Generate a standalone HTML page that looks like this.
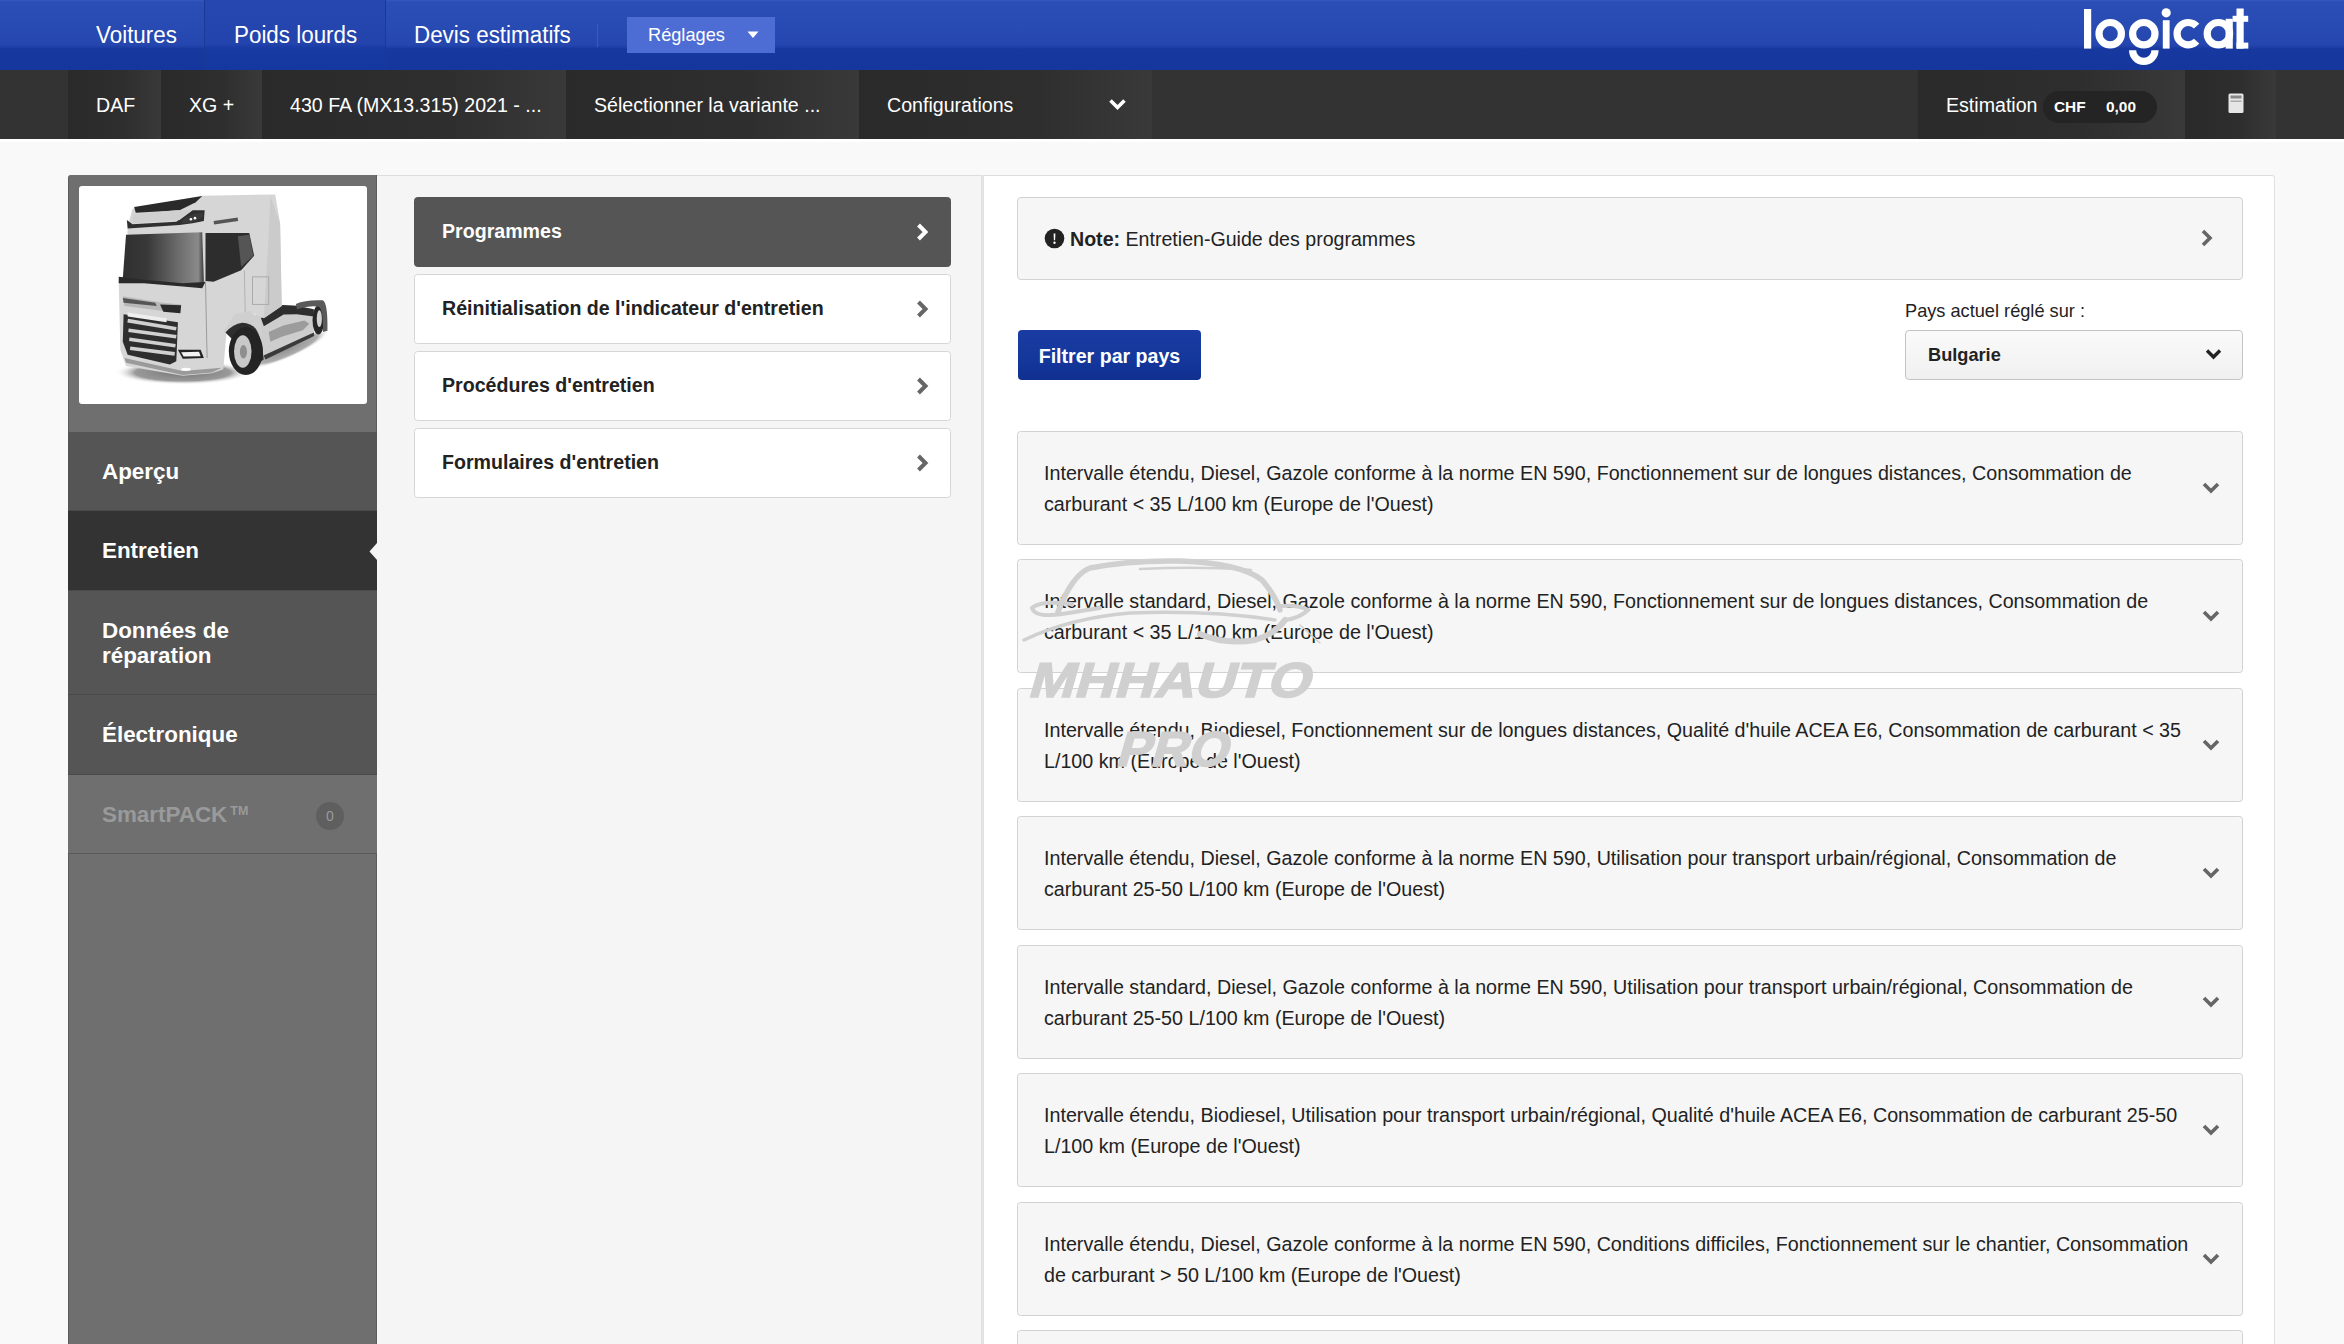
<!DOCTYPE html>
<html><head><meta charset="utf-8">
<style>
*{box-sizing:border-box;margin:0;padding:0}
html,body{width:2344px;height:1344px;overflow:hidden}
body{position:relative;background:#f9f9f9;font-family:"Liberation Sans",sans-serif;color:#222}
.abs{position:absolute}
#top{left:0;top:0;width:2344px;height:70px;background:linear-gradient(#3458c0 0,#2a4db6 3%,#284ab3 40%,#2446ae 64%,#17399f 70%,#15379d 100%)}
.nav{position:absolute;top:0;height:70px;line-height:70px;color:#fff;font-size:22.4px;white-space:nowrap;transform:scaleY(1.1);transform-origin:50% 35px}
#tabact{left:204px;top:0;width:182px;height:70px;border-left:1px solid #1a3896;border-right:1px solid #1a3896;background:linear-gradient(#2647b0 0,#2444ad 62%,#1739a2 70%,#1538a0 100%)}
#sep{left:597px;top:24px;width:1px;height:23px;background:#3a5cc0}
#regl{left:627px;top:17px;width:148px;height:36px;background:#4d6dd5}
#bar{left:0;top:70px;width:2344px;height:69px;background:#333}
.seg{position:absolute;top:70px;height:69px;line-height:71px;color:#fff;font-size:19.6px;white-space:nowrap;padding-left:28px;background:linear-gradient(90deg,#2a2a2a,#2e2e2e 60%,#393939)}
#side{left:68px;top:175px;width:309px;height:1169px;background:#6f6f6f;border-top-left-radius:3px;border-left:1px solid #5d5d5d;border-right:1px solid #5d5d5d}
#imgbox{left:79px;top:186px;width:288px;height:218px;background:#fff;border-radius:3px}
.mi{position:absolute;left:68px;width:309px;color:#fff;font-weight:bold;font-size:22.4px;padding-left:34px;background:#555;border-bottom:1px solid #4a4a4a}
#mid{left:377px;top:175px;width:606px;height:1169px;background:#f5f5f5;border-top:1px solid #ddd}
#div{left:981px;top:175px;width:3px;height:1169px;background:#e2e2e2}
#right{left:984px;top:175px;width:1291px;height:1169px;background:#fff;border-top:1px solid #ddd;border-right:1px solid #e0e0e0;border-top-right-radius:3px}
.btn{position:absolute;left:414px;width:537px;height:70px;background:#fff;border:1.4px solid #d6d6d6;border-radius:3.5px;font-weight:bold;font-size:19.6px;line-height:67px;padding-left:27px;color:#222}
.btn.act{background:#555;border-color:#555;color:#fff}
.chev{position:absolute}
.acc{position:absolute;left:1017px;width:1226px;height:114px;background:#f6f6f6;border:1.4px solid #d2d2d2;border-radius:3.5px;font-size:19.7px;line-height:31px;padding:26px 0 0 26px;color:#222}
</style></head><body>
<div id="top" class="abs"></div>
<div id="tabact" class="abs"></div>
<div class="nav" style="left:96px">Voitures</div>
<div class="nav" style="left:234px">Poids lourds</div>
<div class="nav" style="left:414px">Devis estimatifs</div>
<div id="sep" class="abs"></div>
<div id="regl" class="abs"></div>
<div class="nav" style="left:648px;top:17px;height:36px;line-height:37px;font-size:18.2px;transform:none">Réglages</div>

<div id="bar" class="abs"></div>
<div class="abs" style="left:0;top:139px;width:2344px;height:3px;background:#fff"></div>
<div class="seg" style="left:68px;width:93px">DAF</div>
<div class="seg" style="left:161px;width:101px">XG +</div>
<div class="seg" style="left:262px;width:304px">430 FA (MX13.315) 2021 - ...</div>
<div class="seg" style="left:566px;width:293px">Sélectionner la variante ...</div>
<div class="seg" style="left:859px;width:293px">Configurations</div>
<div class="seg" style="left:1918px;width:267px">Estimation</div>
<div class="seg" style="left:2185px;width:91px"></div>

<div id="side" class="abs"></div>
<div id="imgbox" class="abs"></div>
<div class="mi" style="top:432px;height:79px;line-height:79px">Aperçu</div>
<div class="mi" style="top:511px;height:80px;line-height:80px;background:#333">Entretien</div>
<div class="mi" style="top:591px;height:104px;line-height:25px;padding-top:27px">Données de<br>réparation</div>
<div class="mi" style="top:695px;height:80px;line-height:80px">Électronique</div>
<div class="mi" style="top:775px;height:79px;line-height:79px;background:#6f6f6f;color:#9a9a9a;font-weight:bold;border-bottom:1px solid #5a5a5a">SmartPACK<span style="font-size:12.5px;position:relative;top:-7px;margin-left:3px">TM</span></div>

<div id="mid" class="abs"></div>
<div id="right" class="abs"></div>
<div id="div" class="abs"></div>

<div class="btn act" style="top:197px">Programmes</div>
<div class="btn" style="top:274px">Réinitialisation de l'indicateur d'entretien</div>
<div class="btn" style="top:351px">Procédures d'entretien</div>
<div class="btn" style="top:428px">Formulaires d'entretien</div>


<div class="abs" style="left:1017px;top:197px;width:1226px;height:83px;background:#f6f6f6;border:1.4px solid #d2d2d2;border-radius:4px"></div>
<svg class="abs" style="left:1044px;top:228px" width="21" height="21" viewBox="0 0 21 21"><circle cx="10.5" cy="10.5" r="9.8" fill="#222"/><path d="M9.6 5.5 L11.4 5.5 L11.1 12.2 L9.9 12.2 Z" fill="#fff"/><circle cx="10.5" cy="14.8" r="1.2" fill="#fff"/></svg>
<div class="abs" style="left:1070px;top:198px;height:83px;line-height:83px;font-size:19.6px;color:#222;white-space:nowrap"><b>Note:</b> Entretien-Guide des programmes</div>
<svg class="abs" style="left:2200px;top:229px" width="14" height="18" viewBox="0 0 14 18"><path d="M3 2 L10 9 L3 16" fill="none" stroke="#666" stroke-width="3.6"/></svg>
<div class="abs" style="left:1018px;top:330px;width:183px;height:50px;background:linear-gradient(#1a3ca2,#14379c 60%,#10308f);border-radius:4px;color:#fff;font-weight:bold;font-size:19.6px;line-height:52px;text-align:center">Filtrer par pays</div>
<div class="abs" style="left:1905px;top:296px;font-size:18.2px;line-height:30px;color:#222;white-space:nowrap">Pays actuel réglé sur :</div>
<div class="abs" style="left:1905px;top:330px;width:338px;height:50px;background:linear-gradient(#fafafa,#f0f0f0);border:1.4px solid #c4c4c4;border-radius:4px"></div>
<div class="abs" style="left:1928px;top:330px;height:50px;line-height:51px;font-size:18.2px;font-weight:bold;color:#222">Bulgarie</div>
<svg class="abs" style="left:2205px;top:347px" width="17" height="14" viewBox="0 0 17 14"><path d="M2 3.5 L8.5 10 L15 3.5" fill="none" stroke="#222" stroke-width="3.4"/></svg>

<!-- middle chevrons -->
<svg class="abs" style="left:915px;top:223px" width="16" height="18" viewBox="0 0 16 18"><path d="M3.5 2 L10.5 9 L3.5 16" fill="none" stroke="#fff" stroke-width="4"/></svg>
<svg class="abs" style="left:915px;top:300px" width="16" height="18" viewBox="0 0 16 18"><path d="M3.5 2 L10.5 9 L3.5 16" fill="none" stroke="#666" stroke-width="4"/></svg>
<svg class="abs" style="left:915px;top:377px" width="16" height="18" viewBox="0 0 16 18"><path d="M3.5 2 L10.5 9 L3.5 16" fill="none" stroke="#666" stroke-width="4"/></svg>
<svg class="abs" style="left:915px;top:454px" width="16" height="18" viewBox="0 0 16 18"><path d="M3.5 2 L10.5 9 L3.5 16" fill="none" stroke="#666" stroke-width="4"/></svg>
<!-- breadcrumb config chevron -->
<svg class="abs" style="left:1108px;top:97px" width="19" height="15" viewBox="0 0 19 15"><path d="M2.5 3.5 L9.5 10.5 L16.5 3.5" fill="none" stroke="#fff" stroke-width="3.6"/></svg>
<!-- estimation pill -->
<div class="abs" style="left:2043px;top:91px;width:114px;height:32px;border-radius:16px;background:#242424"></div>
<div class="abs" style="left:2054px;top:91px;height:32px;line-height:32px;color:#fff;font-weight:bold;font-size:15.4px">CHF</div>
<div class="abs" style="left:2106px;top:91px;height:32px;line-height:32px;color:#fff;font-weight:bold;font-size:15.4px">0,00</div>
<!-- calculator -->
<svg class="abs" style="left:2228px;top:93px" width="17" height="21" viewBox="0 0 17 21"><rect x="0.5" y="0.5" width="15" height="19.5" rx="1.5" fill="#e6e6e6"/><rect x="2.5" y="2.5" width="11" height="3" fill="#888"/><rect x="2.5" y="7.5" width="11" height="1.5" fill="#aaa"/></svg>
<!-- reglages triangle -->
<svg class="abs" style="left:747px;top:31px" width="12" height="8" viewBox="0 0 12 8"><path d="M0.5 0.5 L11.5 0.5 L6 7 Z" fill="#fff"/></svg>
<!-- notch -->
<svg class="abs" style="left:369px;top:543px" width="9" height="17" viewBox="0 0 9 17"><path d="M8 0 L0.5 8.5 L8 17 Z" fill="#f5f5f5"/></svg>
<!-- smartpack badge -->
<div class="abs" style="left:316px;top:802px;width:28px;height:28px;border-radius:14px;background:#5f5f5f;color:#9a9a9a;font-size:14px;line-height:28px;text-align:center">0</div>

<!-- logo -->
<svg class="abs" style="left:0;top:0" width="2344" height="70" viewBox="0 0 2344 70">
<g fill="#fff">
<rect x="2084" y="9" width="7.2" height="39.6"/>
<rect x="2162.8" y="20.2" width="6.8" height="28.4"/>
<circle cx="2166.2" cy="12.8" r="4.6"/>
<rect x="2225.6" y="18.8" width="7.2" height="29.8"/>
<rect x="2236.5" y="8.5" width="7.2" height="40.1"/>
<rect x="2232.6" y="15.8" width="15.6" height="6"/>
<rect x="2236.5" y="42.6" width="11.8" height="6"/>
</g>
<g fill="none" stroke="#fff" stroke-width="7.2">
<circle cx="2110.2" cy="33.7" r="11.2"/>
<circle cx="2143.8" cy="33.7" r="11.2"/>
<circle cx="2218.4" cy="33.7" r="11.2"/>
<path d="M2132.6 50.2 A11.2 11.2 0 0 0 2155 50.2"/>
<path d="M2196.6 26.2 A11.2 11.2 0 1 0 2196.6 41.2"/>
</g>
</svg>

<!-- truck -->
<svg class="abs" style="left:79px;top:186px" width="288" height="218" viewBox="0 0 1776 1344">
<defs>
<linearGradient id="ws" x1="0" y1="0" x2="1" y2="0"><stop offset="0" stop-color="#303030"/><stop offset="0.3" stop-color="#383838"/><stop offset="0.7" stop-color="#6e6e6e"/><stop offset="0.93" stop-color="#8a8a8a"/><stop offset="1" stop-color="#3a3a3a"/></linearGradient>
<radialGradient id="sh" cx="0.5" cy="0.5" r="0.5"><stop offset="0" stop-color="#777"/><stop offset="0.7" stop-color="#999"/><stop offset="1" stop-color="#fff" stop-opacity="0"/></radialGradient>
</defs>
<ellipse cx="640" cy="1150" rx="420" ry="75" fill="url(#sh)"/>

<!-- chassis side -->
<ellipse cx="1290" cy="1005" rx="280" ry="55" fill="url(#sh)" opacity="0.8" transform="rotate(-24 1290 1005)"/>
<path d="M1090 793 L1255 733 L1343 738 L1448 760 L1448 903 L1139 1045 L1100 960 Z" fill="#cdcdcd"/>
<path d="M1122 815 L1255 733 L1343 738 L1448 760 L1448 805 L1343 790 L1262 792 L1140 865 Z" fill="#2e2e2e"/>
<path d="M1170 900 L1260 860 L1390 830 L1420 850 L1380 890 L1250 930 L1180 960 Z" fill="#9c9c9c"/>
<path d="M1139 1045 L1448 903 L1450 925 L1150 1070 Z" fill="#3a3a3a"/>
<!-- rear wheel -->
<ellipse cx="1476" cy="826" rx="36" ry="90" fill="#262626"/>
<ellipse cx="1482" cy="818" rx="16" ry="52" fill="#d2d2d2"/>
<path d="M1337 727 Q1400 700 1503 705 Q1535 720 1532 892 L1505 900 Q1505 760 1480 745 Q1420 735 1345 760 Z" fill="#5a5a5a"/>
<!-- cab body -->
<path d="M300 250 L330 140 L760 60 L1210 52 L1240 230 L1250 740 L1140 815 L1060 780 L960 800 L910 900 L890 1130 L820 1155 L640 1170 L290 1110 L255 1010 L245 590 L290 540 Z" fill="#d6d6d6"/>
<path d="M1180 60 L1240 230 L1250 740 L1140 815 L1170 300 Z" fill="#cbcbcb"/>
<!-- roof dark strip -->
<path d="M340 130 L760 62 L720 100 L620 150 L350 165 Z" fill="#2a2a2a"/>
<path d="M295 210 L300 262 L620 240 L700 230 L770 215 L775 150 L700 150 L600 220 L330 235 Z" fill="#2f2f2f"/>
<path d="M330 175 L600 150 L700 150 L620 210 L330 230 Z" fill="#d0d0d0"/>
<ellipse cx="700" cy="200" rx="70" ry="22" fill="#3a3a3a" transform="rotate(-20 700 200)"/>
<circle cx="690" cy="205" r="8" fill="#fff"/><circle cx="715" cy="198" r="8" fill="#fff"/>
<rect x="830" y="215" width="150" height="22" fill="#555" transform="rotate(-8 830 215)"/>
<!-- windscreen -->
<path d="M290 300 L760 285 L770 590 L640 605 L380 585 L270 570 Z" fill="url(#ws)"/>
<path d="M780 290 L1050 290 L1080 430 L1000 520 L830 590 L780 585 Z" fill="#2d2d2d"/>
<path d="M980 310 L1050 300 L1075 430 L1000 500 Z" fill="#555"/>
<path d="M245 560 L420 580 L640 600 L780 590 L760 630 L640 620 L400 600 L245 600 Z" fill="#2a2a2a"/>
<!-- door lines -->
<path d="M780 590 L790 1060" stroke="#999" stroke-width="6" fill="none"/>
<path d="M1020 520 L1025 780" stroke="#aaa" stroke-width="5" fill="none"/>
<rect x="1070" y="560" width="100" height="170" fill="none" stroke="#aaa" stroke-width="6"/>
<!-- headlight strip -->
<path d="M270 680 L520 720 L630 730 L625 780 L520 770 L280 740 Z" fill="#b8b8b8"/>
<path d="M500 730 L630 735 L625 785 L520 775 Z" fill="#2a2a2a"/>
<path d="M270 690 L470 720 L480 740 L275 720 Z" fill="#555"/>
<!-- grille -->
<path d="M275 790 L610 840 L600 1080 L560 1100 L300 1040 L270 960 Z" fill="#2e2e2e"/>
<g stroke="#d0d0d0" stroke-width="22" fill="none">
<path d="M300 830 L600 880"/>
<path d="M305 890 L600 930"/>
<path d="M310 945 L595 985"/>
<path d="M315 1000 L590 1035"/>
</g>
<path d="M300 780 L540 815 L540 840 L300 805 Z" fill="#eee"/>
<!-- lower headlamp -->
<path d="M610 1010 L750 1010 L770 1060 L640 1065 Z" fill="#222"/>
<path d="M630 1025 L740 1022 L750 1050 L645 1052 Z" fill="#f2f2f2"/>
<path d="M290 1090 L640 1165 L820 1150 L880 1120 L640 1140 L280 1060 Z" fill="#9a9a9a"/>
<ellipse cx="660" cy="1130" rx="30" ry="10" fill="#fff"/>
<path d="M890 900 L960 790 L1051 771 L1122 818 L1139 1045 L1100 1080 L1000 900 Z" fill="#cfcfcf"/>
<!-- front wheel arch and wheel -->
<path d="M903 903 Q950 850 1007 843 Q1060 845 1090 880 Q1125 930 1139 1069 L1110 1090 L1060 1060 Z" fill="#2e2e2e"/>
<ellipse cx="1029" cy="1018" rx="105" ry="148" fill="#242424"/>
<ellipse cx="1010" cy="1020" rx="54" ry="100" fill="#c8c8c8"/>
<ellipse cx="1014" cy="1022" rx="22" ry="42" fill="#8e8e8e"/>
</svg>
<!--ACC-->
<div class="acc" style="top:430.5px">Intervalle étendu, Diesel, Gazole conforme à la norme EN 590, Fonctionnement sur de longues distances, Consommation de<br>carburant &lt; 35 L/100 km (Europe de l'Ouest)</div>
<svg class="chev" style="left:2202px;top:479.5px" width="18" height="14" viewBox="0 0 18 14"><path d="M2 4 L9 11 L16 4" fill="none" stroke="#666" stroke-width="3.6"/></svg>
<div class="acc" style="top:559.0px">Intervalle standard, Diesel, Gazole conforme à la norme EN 590, Fonctionnement sur de longues distances, Consommation de<br>carburant &lt; 35 L/100 km (Europe de l'Ouest)</div>
<svg class="chev" style="left:2202px;top:608.0px" width="18" height="14" viewBox="0 0 18 14"><path d="M2 4 L9 11 L16 4" fill="none" stroke="#666" stroke-width="3.6"/></svg>
<div class="acc" style="top:687.5px">Intervalle étendu, Biodiesel, Fonctionnement sur de longues distances, Qualité d'huile ACEA E6, Consommation de carburant &lt; 35<br>L/100 km (Europe de l'Ouest)</div>
<svg class="chev" style="left:2202px;top:736.5px" width="18" height="14" viewBox="0 0 18 14"><path d="M2 4 L9 11 L16 4" fill="none" stroke="#666" stroke-width="3.6"/></svg>
<div class="acc" style="top:816.0px">Intervalle étendu, Diesel, Gazole conforme à la norme EN 590, Utilisation pour transport urbain/régional, Consommation de<br>carburant 25-50 L/100 km (Europe de l'Ouest)</div>
<svg class="chev" style="left:2202px;top:865.0px" width="18" height="14" viewBox="0 0 18 14"><path d="M2 4 L9 11 L16 4" fill="none" stroke="#666" stroke-width="3.6"/></svg>
<div class="acc" style="top:944.5px">Intervalle standard, Diesel, Gazole conforme à la norme EN 590, Utilisation pour transport urbain/régional, Consommation de<br>carburant 25-50 L/100 km (Europe de l'Ouest)</div>
<svg class="chev" style="left:2202px;top:993.5px" width="18" height="14" viewBox="0 0 18 14"><path d="M2 4 L9 11 L16 4" fill="none" stroke="#666" stroke-width="3.6"/></svg>
<div class="acc" style="top:1073.0px">Intervalle étendu, Biodiesel, Utilisation pour transport urbain/régional, Qualité d'huile ACEA E6, Consommation de carburant 25-50<br>L/100 km (Europe de l'Ouest)</div>
<svg class="chev" style="left:2202px;top:1122.0px" width="18" height="14" viewBox="0 0 18 14"><path d="M2 4 L9 11 L16 4" fill="none" stroke="#666" stroke-width="3.6"/></svg>
<div class="acc" style="top:1201.5px">Intervalle étendu, Diesel, Gazole conforme à la norme EN 590, Conditions difficiles, Fonctionnement sur le chantier, Consommation<br>de carburant &gt; 50 L/100 km (Europe de l'Ouest)</div>
<svg class="chev" style="left:2202px;top:1250.5px" width="18" height="14" viewBox="0 0 18 14"><path d="M2 4 L9 11 L16 4" fill="none" stroke="#666" stroke-width="3.6"/></svg>
<div class="acc" style="top:1330.0px"><br></div>
<svg class="chev" style="left:2202px;top:1379.0px" width="18" height="14" viewBox="0 0 18 14"><path d="M2 4 L9 11 L16 4" fill="none" stroke="#666" stroke-width="3.6"/></svg>
<!--/ACC-->
<!-- watermark -->
<svg class="abs" style="left:1000px;top:540px" width="340" height="250" viewBox="1000 540 340 250">
<g fill="none" stroke="#d0d0d0" stroke-linecap="round">
<path d="M1058 612 Q1072 575 1090 568 Q1130 560 1180 561 Q1240 563 1262 580 Q1275 595 1280 610" stroke-width="5.5"/>
<path d="M1140 569 Q1200 566 1251 570" stroke-width="2.5"/>
<path d="M1024 640 Q1070 618 1130 613 Q1210 610 1275 620" stroke-width="3.5"/>
<path d="M1072 604 Q1040 600 1032 608 Q1035 618 1062 614 L1100 608" stroke-width="4"/>
<path d="M1200 634 Q1225 645 1255 640 Q1275 634 1285 620" stroke-width="6"/>
<path d="M1282 606 Q1300 605 1308 610 Q1300 618 1285 620" stroke-width="4"/>
<path d="M1300 625 L1320 643" stroke-width="1.5"/>
</g>
<g fill="#d0d0d0" stroke="#d0d0d0" stroke-width="1.5" font-family="Liberation Sans" font-weight="bold" font-size="49">
<text x="0" y="0" transform="translate(1027 697) skewX(-16) scale(1.13 1)">MHHAUTO</text>
<text x="0" y="0" transform="translate(1115 766) skewX(-16) scale(1.05 1)">PRO</text>
</g>
</svg>

</body></html>
